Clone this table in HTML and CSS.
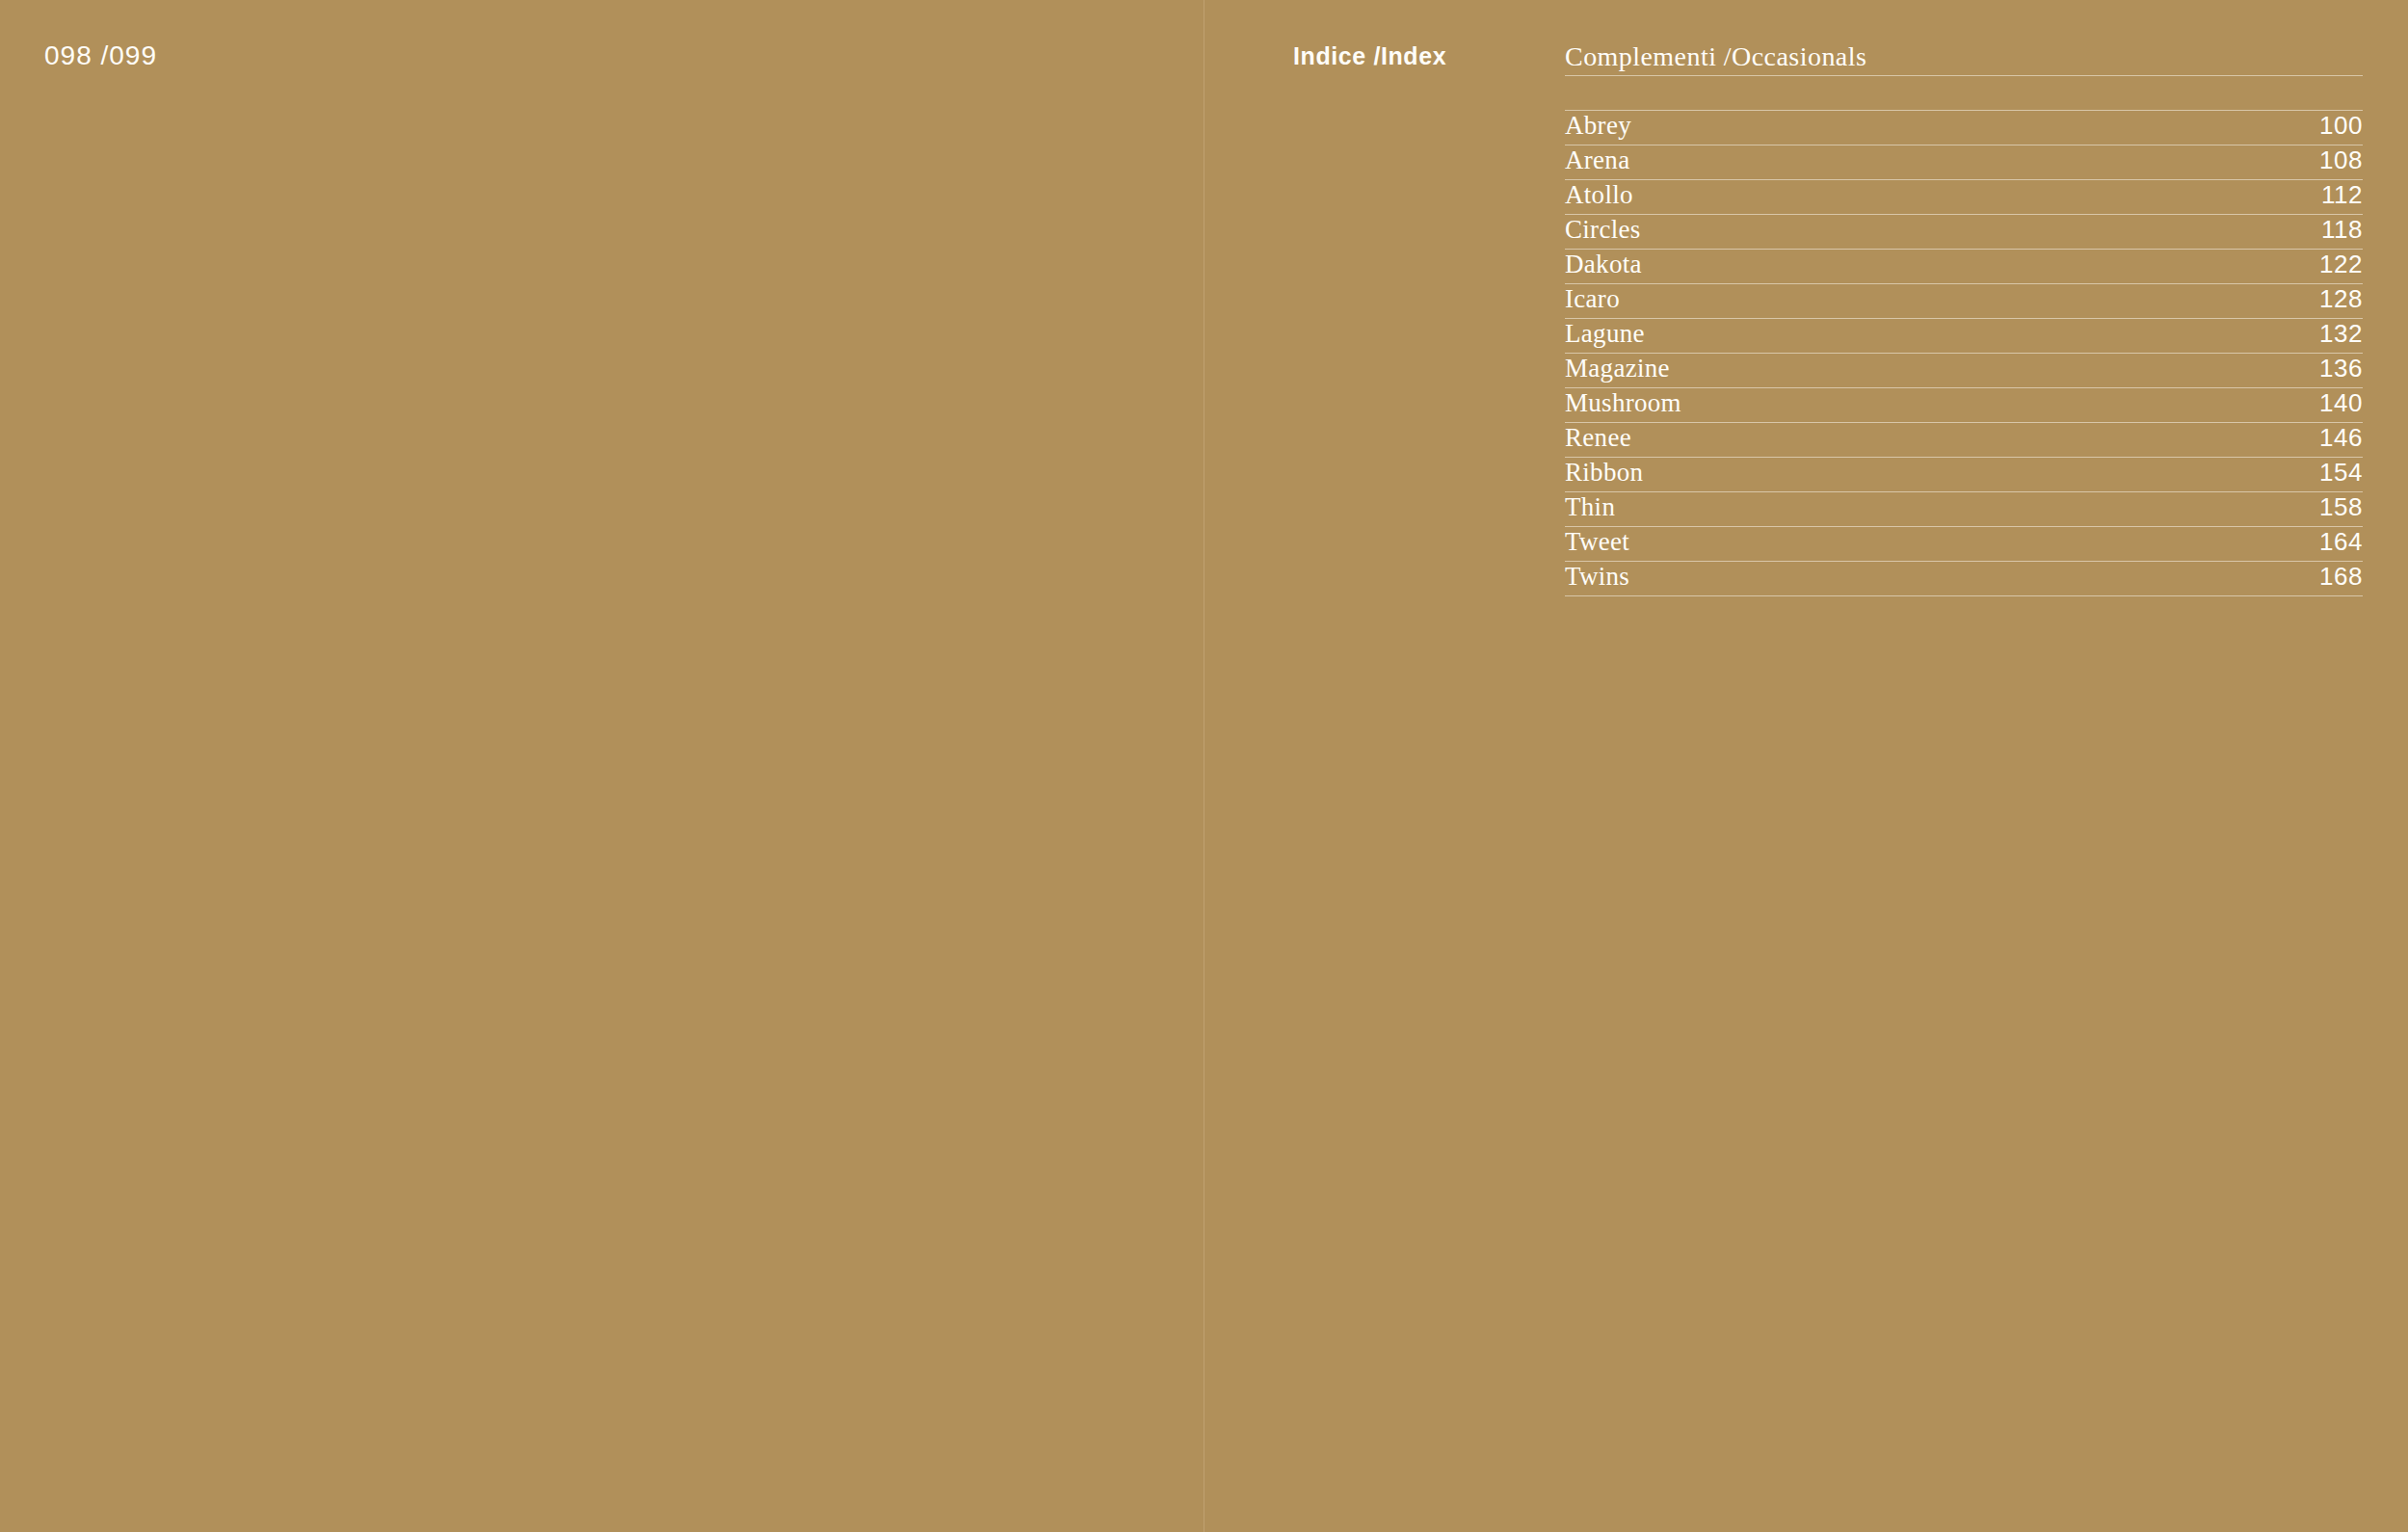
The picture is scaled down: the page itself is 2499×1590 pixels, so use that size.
FILE: index.html
```html
<!DOCTYPE html>
<html lang="it">
<head>
<meta charset="utf-8">
<title>Indice / Index</title>
<link rel="stylesheet" href="styles.css">
</head>
<body>
<div class="spread">
  <section class="page page-left">
    <div class="folio">098 /099</div>
  </section>
  <section class="page page-right">
    <div class="label">Indice /Index</div>
    <div class="index">
      <div class="index-title">Complementi /Occasionals</div>
      <ul class="index-list">
        <li class="row"><span class="name">Abrey</span><span class="num">100</span></li>
        <li class="row"><span class="name">Arena</span><span class="num">108</span></li>
        <li class="row"><span class="name">Atollo</span><span class="num">112</span></li>
        <li class="row"><span class="name">Circles</span><span class="num">118</span></li>
        <li class="row"><span class="name">Dakota</span><span class="num">122</span></li>
        <li class="row"><span class="name">Icaro</span><span class="num">128</span></li>
        <li class="row"><span class="name">Lagune</span><span class="num">132</span></li>
        <li class="row"><span class="name">Magazine</span><span class="num">136</span></li>
        <li class="row"><span class="name">Mushroom</span><span class="num">140</span></li>
        <li class="row"><span class="name">Renee</span><span class="num">146</span></li>
        <li class="row"><span class="name">Ribbon</span><span class="num">154</span></li>
        <li class="row"><span class="name">Thin</span><span class="num">158</span></li>
        <li class="row"><span class="name">Tweet</span><span class="num">164</span></li>
        <li class="row"><span class="name">Twins</span><span class="num">168</span></li>
      </ul>
    </div>
  </section>
</div>
</body>
</html>
```
FILE: styles.css
```css
html, body {
  margin: 0;
  padding: 0;
}

body {
  background: #b1905a;
  color: #fffdf8;
  width: 2499px;
  height: 1590px;
  overflow: hidden;
}

.spread {
  display: flex;
  height: 1590px;
}

.page {
  box-sizing: border-box;
  height: 100%;
}

.page-left {
  width: 1250px;
  border-right: 1px solid #bfa070;
  padding-left: 46px;
}

.folio {
  font-family: "Liberation Sans", Arial, sans-serif;
  font-size: 28px;
  line-height: 28px;
  letter-spacing: 1px;
  margin-top: 44px;
}

.page-right {
  width: 1249px;
  padding: 0 47px 0 92px;
  display: grid;
  grid-template-columns: 282px 1fr;
  align-items: start;
}

.label {
  font-family: "Liberation Sans", Arial, sans-serif;
  font-weight: 700;
  font-size: 25px;
  line-height: 25px;
  letter-spacing: 0.6px;
  margin-top: 46px;
}

.index-title {
  font-family: "Liberation Serif", "Times New Roman", serif;
  font-size: 28px;
  line-height: 30px;
  letter-spacing: 0.45px;
  padding-top: 44px;
  padding-bottom: 4px;
  border-bottom: 1px solid #d8c6a8;
}

.index-list {
  list-style: none;
  margin: 35px 0 0;
  padding: 0;
  border-top: 1px solid #d8c6a8;
}

.row {
  display: flex;
  justify-content: space-between;
  align-items: baseline;
  padding-bottom: 5px;
  border-bottom: 1px solid #d8c6a8;
}

.name {
  font-family: "Liberation Serif", "Times New Roman", serif;
  font-size: 27px;
  line-height: 30px;
  letter-spacing: 0.3px;
}

.num {
  font-family: "Liberation Sans", Arial, sans-serif;
  font-size: 26px;
  line-height: 30px;
  letter-spacing: 0.5px;
}
```
